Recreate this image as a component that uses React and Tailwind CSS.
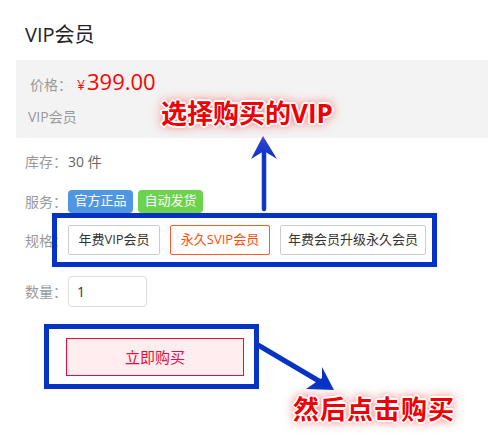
import React from "react";

const font = { fontFamily: '"Open Sans", "Noto Sans CJK SC", sans-serif' };

export default function App() {
  return (
    <div
      className="relative w-[488px] h-[441px] bg-white overflow-hidden text-[#333]"
      style={font}
    >
      <div className="pt-[24px] pl-[25px] text-[20px] leading-[22px] text-[#222]">VIP会员</div>

      <div className="mt-[14px] ml-[16px] h-[78px] bg-[#f3f3f3] flex flex-col">
        <div className="flex items-baseline pl-[14px] pt-[8px] h-[34px]">
          <span className="text-[14px] text-[#999]">价格：</span>
          <span className="ml-[5px] text-[14px] text-[#f00]">¥</span>
          <span className="ml-[2px] text-[22px] leading-[26px] text-[#f00]">399.00</span>
        </div>
        <div className="pl-[12px] mt-[14px] text-[14px] leading-[18px] text-[#999]">VIP会员</div>
      </div>

      <div className="mt-[10px] pl-[25px] h-[26px] flex items-center text-[14px]">
        <span className="w-[43px] text-[#999]">库存：</span>
        <span className="text-[#666]">30 件</span>
      </div>

      <div className="mt-[14px] pl-[25px] h-[26px] flex items-center text-[14px]">
        <span className="w-[43px] text-[#999]">服务：</span>
        <span className="h-[23px] w-[65px] rounded-[4px] bg-[#5196e0] text-white text-[13px] flex items-center justify-center">官方正品</span>
        <span className="ml-[5px] h-[23px] w-[65px] rounded-[4px] bg-[#6dd24c] text-white text-[13px] flex items-center justify-center">自动发货</span>
      </div>

      <div className="mt-[11px] pl-[25px] h-[30px] flex items-center text-[14px]">
        <span className="w-[43px] text-[#999]">规格：</span>
        <div className="flex gap-[10px] text-[13px]">
          <span className="h-[30px] w-[92px] border border-[#ccc] rounded-[2px] flex items-center justify-center text-[#333]">年费VIP会员</span>
          <span className="h-[30px] w-[100px] border border-[#ff5a1f] rounded-[2px] flex items-center justify-center text-[#ff4d10]">永久SVIP会员</span>
          <span className="h-[30px] w-[146px] border border-[#ccc] rounded-[2px] flex items-center justify-center text-[#333]">年费会员升级永久会员</span>
        </div>
      </div>

      <div className="mt-[21px] pl-[25px] h-[31px] flex items-center text-[14px]">
        <span className="w-[43px] text-[#999]">数量：</span>
        <div className="h-[31px] w-[79px] border border-[#ddd] rounded-[4px] flex items-center pl-[8px] text-[14px] text-[#333]">1</div>
      </div>

      <div className="mt-[31px] ml-[66px] h-[38px] w-[178px] border border-[#ee0a3c] bg-[#ffedef] flex items-center justify-center text-[15px] text-[#e8103a]">
        立即购买
      </div>

      {/* annotations */}
      <div className="absolute left-[52px] top-[213px] w-[385px] h-[54px] border-[5px] border-[#0633c4]" />
      <div className="absolute left-[44px] top-[324px] w-[215px] h-[65px] border-[5px] border-[#0633c4]" />

      <svg className="absolute left-0 top-0" width="488" height="441" viewBox="0 0 488 441">
        <defs>
          <linearGradient id="ga" x1="0" y1="0" x2="0" y2="1">
            <stop offset="0" stopColor="#7a3cc8" />
            <stop offset="0.25" stopColor="#2a3fd0" />
            <stop offset="1" stopColor="#0a33c8" />
          </linearGradient>
        </defs>
        <line x1="264" y1="209" x2="264" y2="150" stroke="#0f36c8" strokeWidth="4.5" strokeLinecap="round" />
        <polygon points="263,136 251,159 264,151 277,159" fill="url(#ga)" />
        <line x1="258" y1="345" x2="324" y2="384" stroke="#0633c4" strokeWidth="5" />
        <polygon points="334,390 322,367 322,378 306,389" fill="#0633c4" />
      </svg>

      <div
        className="absolute left-[161px] top-[97px] text-[26px] leading-[32px] font-bold text-[#f00000] [text-shadow:1px_1px_0_#fff,-1px_-1px_0_#fff,1px_-1px_0_#fff,-1px_1px_0_#fff,2px_0_0_#fff,-2px_0_0_#fff,0_2px_0_#fff,0_-2px_0_#fff,0_0_8px_#ff5a5a,0_0_14px_#ff9a9a]"
      >
        选择购买的VIP
      </div>
      <div
        className="absolute left-[293px] top-[393px] text-[26px] leading-[32px] font-bold tracking-[1px] text-[#f00000] [text-shadow:1px_1px_0_#fff,-1px_-1px_0_#fff,1px_-1px_0_#fff,-1px_1px_0_#fff,2px_0_0_#fff,-2px_0_0_#fff,0_2px_0_#fff,0_-2px_0_#fff,0_0_8px_#ff5a5a,0_0_14px_#ff9a9a]"
      >
        然后点击购买
      </div>
    </div>
  );
}
